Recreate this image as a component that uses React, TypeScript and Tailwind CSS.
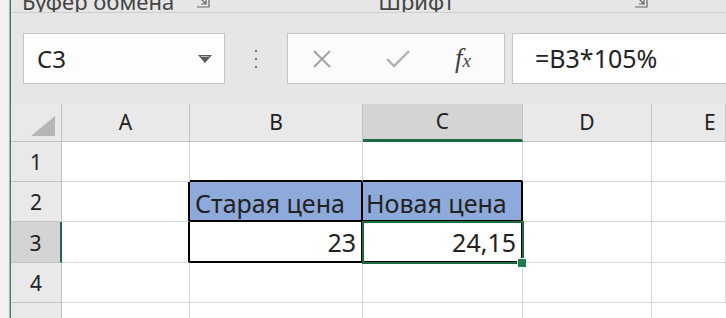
const cols = ['A', 'B', 'C', 'D', 'E']

function Launcher() {
  return (
    <svg width="14" height="14" viewBox="0 0 14 14" className="text-[#666]">
      <path d="M1 13h12V1" fill="none" stroke="currentColor" strokeWidth="1.2" />
      <path d="M4 4l6 6M10 5v5H5" fill="none" stroke="currentColor" strokeWidth="1.2" />
    </svg>
  )
}

function Cell({ className = '', bg = 'bg-white', children }: { className?: string; bg?: string; children?: React.ReactNode }) {
  return <div className={`flex items-center border-r border-b border-[#d6d6d6] ${bg} ${className}`}>{children}</div>
}

export default function App() {
  return (
    <div className="relative flex h-[318px] w-[726px] overflow-hidden bg-[#e6e6e6] font-['Noto_Sans',sans-serif] text-[#222]">
      <div className="w-[9px] shrink-0 bg-[#f1f1f1]" />
      <div className="w-px shrink-0 bg-[#9fb3a7]" />
      <div className="w-px shrink-0 bg-[#4e7a60]" />

      <div className="flex min-w-0 flex-1 flex-col">
        {/* ribbon group labels, cut at the top */}
        <div className="relative h-[13px] shrink-0 overflow-hidden border-b border-[#cdcdcd]">
          <div className="-mt-[10px] flex items-start text-[22px] leading-[22px] text-[#444]">
            <span className="ml-[11px]">Буфер обмена</span>
            <span className="ml-[22px] mt-[4px]"><Launcher /></span>
            <span className="ml-[168px]">Шрифт</span>
            <span className="ml-[180px] mt-[4px]"><Launcher /></span>
          </div>
        </div>

        {/* formula bar */}
        <div className="flex h-[91px] shrink-0 items-start pt-[20px]">
          <div className="ml-[12px] flex h-[51px] w-[202px] items-center justify-between border border-[#c4c4c4] bg-[#fdfdfd] pl-[13px] pr-[12px]">
            <span className="text-[24px]">C3</span>
            <svg width="14" height="8" viewBox="0 0 14 8">
              <path d="M0 0h14L7 8z" fill="#5a5a5a" />
              <path d="M3 1.5h8" stroke="#bbb" strokeWidth="1" />
            </svg>
          </div>
          <div className="ml-[30px] flex h-[51px] flex-col items-center justify-center gap-[6px]">
            <span className="h-[2px] w-[2px] bg-[#777]" />
            <span className="h-[2px] w-[2px] bg-[#777]" />
            <span className="h-[2px] w-[2px] bg-[#777]" />
          </div>
          <div className="ml-[30px] flex h-[51px] w-[218px] items-center border border-[#c4c4c4] bg-[#fbfbfb]">
            <svg width="20" height="20" viewBox="0 0 20 20" className="ml-[24px]">
              <path d="M2 2l16 16M18 2L2 18" stroke="#a3a3a3" strokeWidth="2" />
            </svg>
            <svg width="26" height="20" viewBox="0 0 26 20" className="ml-[53px]">
              <path d="M2 10l7 7L24 2" fill="none" stroke="#b0b0b0" strokeWidth="2.4" />
            </svg>
            <span className="ml-[44px] font-['Liberation_Serif',serif] text-[27px] italic leading-none text-[#444]">
              f<span className="text-[19px]">x</span>
            </span>
          </div>
          <div className="ml-[7px] flex h-[51px] flex-1 items-center border border-r-0 border-[#c4c4c4] bg-white pl-[22px] text-[25px]">
            =B3*105%
          </div>
        </div>

        {/* sheet */}
        <div className="relative grid flex-1 grid-cols-[51px_128px_173px_160px_129px_1fr] grid-rows-[38px_40px_40px_41px_40px_1fr]">
          <div className="relative border-r border-b border-[#c3c3c3] bg-[#e9e9e9]">
            <svg width="24" height="20" viewBox="0 0 24 20" className="absolute bottom-[5px] right-[6px]">
              <path d="M24 0v20H0z" fill="#b5b5b5" />
            </svg>
          </div>
          {cols.map((c) => (
            <div
              key={c}
              className={`flex items-center justify-center border-r border-[#c3c3c3] text-[21px] ${
                c === 'C' ? 'border-b-[3px] border-b-[#1f6b41] bg-[#d4d4d4]' : 'border-b bg-[#e9e9e9]'
              } ${c === 'E' ? 'justify-start pl-[52px]' : ''}`}
            >
              {c}
            </div>
          ))}

          {/* row 1 */}
          <div className="flex items-center justify-center border-r border-b border-[#c3c3c3] bg-[#e9e9e9] pt-[3px] text-[21px]">1</div>
          <Cell />
          <Cell className="border-b-2 border-b-black" />
          <Cell className="border-b-2 border-b-black" />
          <Cell />
          <Cell />

          {/* row 2 */}
          <div className="flex items-center justify-center border-r border-b border-[#c3c3c3] bg-[#e9e9e9] pt-[3px] text-[21px]">2</div>
          <Cell className="border-r-2 border-r-black" />
          <Cell bg="bg-[#8eaadb]" className="border-r-2 border-b-2 border-black pl-[5px] pt-[4px] text-[25px] leading-none">
            Старая цена
          </Cell>
          <Cell bg="bg-[#8eaadb]" className="border-r-2 border-b-2 border-black pl-[3px] pt-[4px] text-[25px] leading-none">
            Новая цена
          </Cell>
          <Cell />
          <Cell />

          {/* row 3 */}
          <div className="flex items-center justify-center border-r-2 border-b border-r-[#1f6b41] border-b-[#c3c3c3] bg-[#d4d4d4] pt-[3px] text-[21px]">3</div>
          <Cell className="border-r-2 border-r-black" />
          <Cell className="justify-end border-r-2 border-b-2 border-black pr-[5px] pt-[3px] text-[25px]">23</Cell>
          <Cell className="justify-end border-r-2 border-b-2 border-black pr-[5px] pt-[3px] text-[25px]">24,15</Cell>
          <Cell />
          <Cell />

          {/* row 4 */}
          <div className="flex items-center justify-center border-r border-b border-[#c3c3c3] bg-[#e9e9e9] pt-[3px] text-[21px]">4</div>
          <Cell />
          <Cell />
          <Cell />
          <Cell />
          <Cell />

          {/* row 5 */}
          <div className="border-r border-[#c3c3c3] bg-[#e9e9e9]" />
          <div className="border-r border-[#d6d6d6] bg-white" />
          <div className="border-r border-[#d6d6d6] bg-white" />
          <div className="border-r border-[#d6d6d6] bg-white" />
          <div className="border-r border-[#d6d6d6] bg-white" />
          <div className="bg-white" />

          {/* active cell C3 */}
          <div className="pointer-events-none absolute left-[351px] top-[117px] h-[43px] w-[162px] border-2 border-[#1f6b41]" />
          <div className="absolute left-[506px] top-[154px] h-[10px] w-[10px] border border-white bg-[#237a4a]" />
        </div>
      </div>
    </div>
  )
}
